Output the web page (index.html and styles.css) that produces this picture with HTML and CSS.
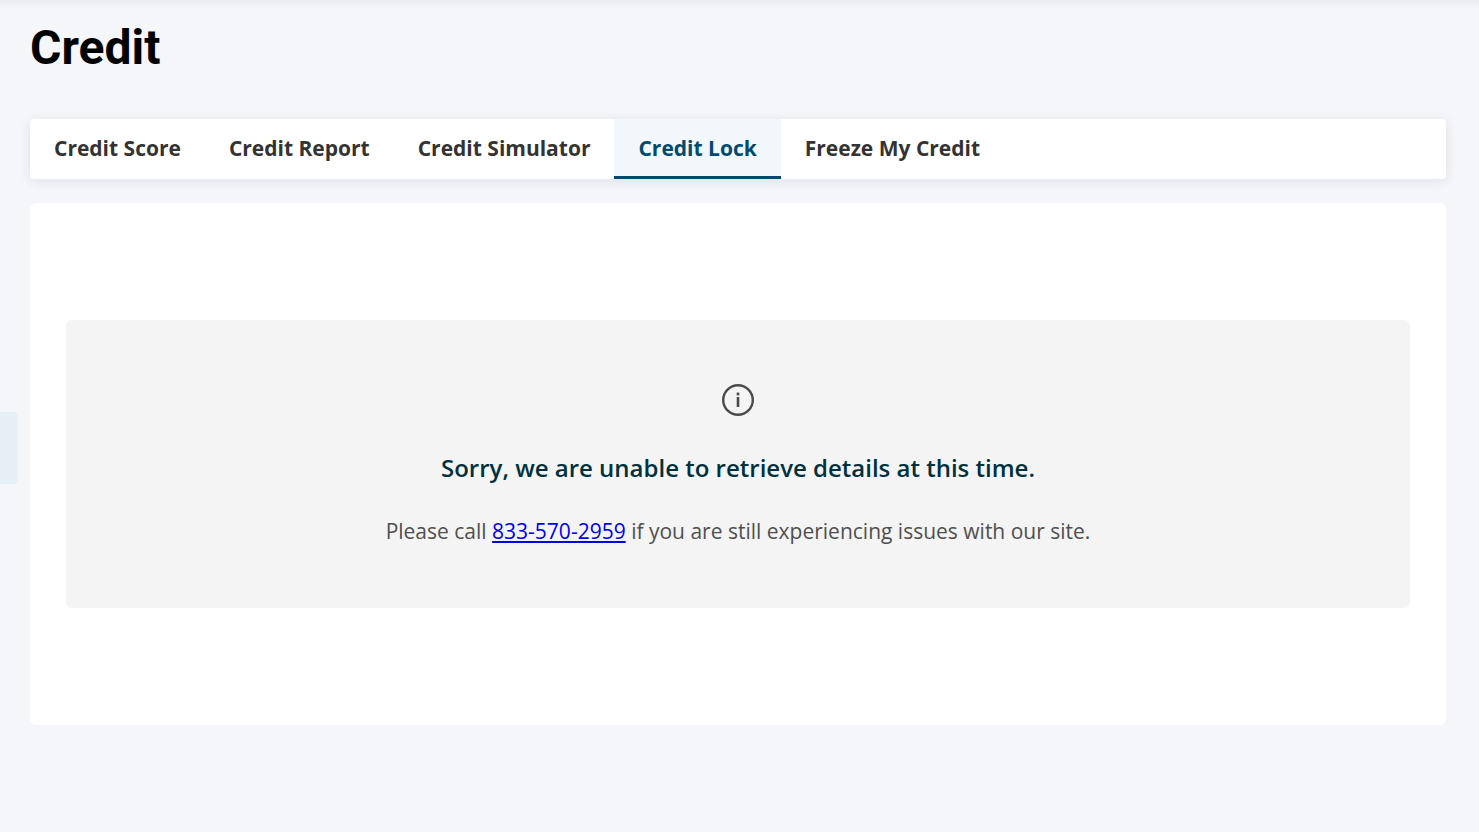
FILE: index.html
```html
<!DOCTYPE html>
<html lang="en">
<head>
<meta charset="utf-8">
<title>Credit</title>
<link rel="stylesheet" href="styles.css">
</head>
<body>
<div class="topshade"></div>
<button class="sidetab" aria-label="Open side panel"></button>
<main class="page">
  <h1 class="title">Credit</h1>
  <nav class="tabs">
    <a class="tab">Credit Score</a>
    <a class="tab">Credit Report</a>
    <a class="tab">Credit Simulator</a>
    <a class="tab active">Credit Lock</a>
    <a class="tab">Freeze My Credit</a>
  </nav>
  <section class="card">
    <div class="notice">
      <svg class="icon" width="32" height="32" viewBox="0 0 32 32" fill="none" stroke="#4a4a4a">
        <circle cx="16" cy="16" r="14.8" stroke-width="2.4"/>
        <path d="M16 13v10" stroke-width="2.6"/>
        <path d="M16 8.6v2.8" stroke-width="2.6"/>
      </svg>
      <h2 class="heading">Sorry, we are unable to retrieve details at this time.</h2>
      <p class="message">Please call <a class="phone" href="#">833-570-2959</a> if you are still experiencing issues with our site.</p>
    </div>
  </section>
</main>
</body>
</html>
```
FILE: styles.css
```css
* { box-sizing: border-box; }
html, body { margin: 0; height: 100%; }
body {
  background: #f4f6fa;
  font-family: "Open Sans", "Liberation Sans", sans-serif;
  overflow: hidden;
  position: relative;
}
.topshade {
  position: absolute;
  top: 0; left: 0; right: 0;
  height: 10px;
  background: linear-gradient(#ebecef, #f4f6fa);
}
.sidetab {
  position: absolute;
  left: 0; top: 412px;
  width: 18px; height: 72px;
  border: 0; padding: 0;
  background: #e6eef6;
  border-radius: 0 5px 5px 0;
}
.page {
  position: relative;
  padding: 0 33px 0 30px;
}
.title {
  margin: 0;
  padding-top: 20px;
  height: 119px;
  font-family: Roboto, "Liberation Sans", sans-serif;
  font-weight: 700;
  font-size: 48px;
  line-height: 56px;
  color: #000;
}
.tabs {
  display: flex;
  height: 60px;
  background: #fff;
  border-radius: 4px;
  box-shadow: 0 2px 12px rgba(30, 40, 60, 0.1);
  overflow: hidden;
}
.tab {
  display: flex;
  align-items: center;
  padding: 1px 24px 0;
  font-size: 21px;
  font-weight: 700;
  color: #333;
  border-bottom: 3px solid transparent;
}
.tab.active {
  color: #004a6f;
  background: #f2f7fb;
  border-bottom-color: #004a6f;
}
.card {
  margin-top: 24px;
  height: 522px;
  padding: 117px 36px 0;
  background: #fff;
  border-radius: 6px;
}
.notice {
  display: flex;
  flex-direction: column;
  align-items: center;
  height: 288px;
  padding-top: 64px;
  background: #f4f4f4;
  border-radius: 6px;
}
.icon { display: block; }
.heading {
  margin: 34px 0 0;
  font-size: 24px;
  line-height: 36px;
  font-weight: 600;
  color: #00313f;
}
.message {
  margin: 27px 0 0;
  font-size: 21px;
  line-height: 36px;
  color: #4f4f4f;
}
.phone { color: #0000ee; text-decoration: underline; }
```
